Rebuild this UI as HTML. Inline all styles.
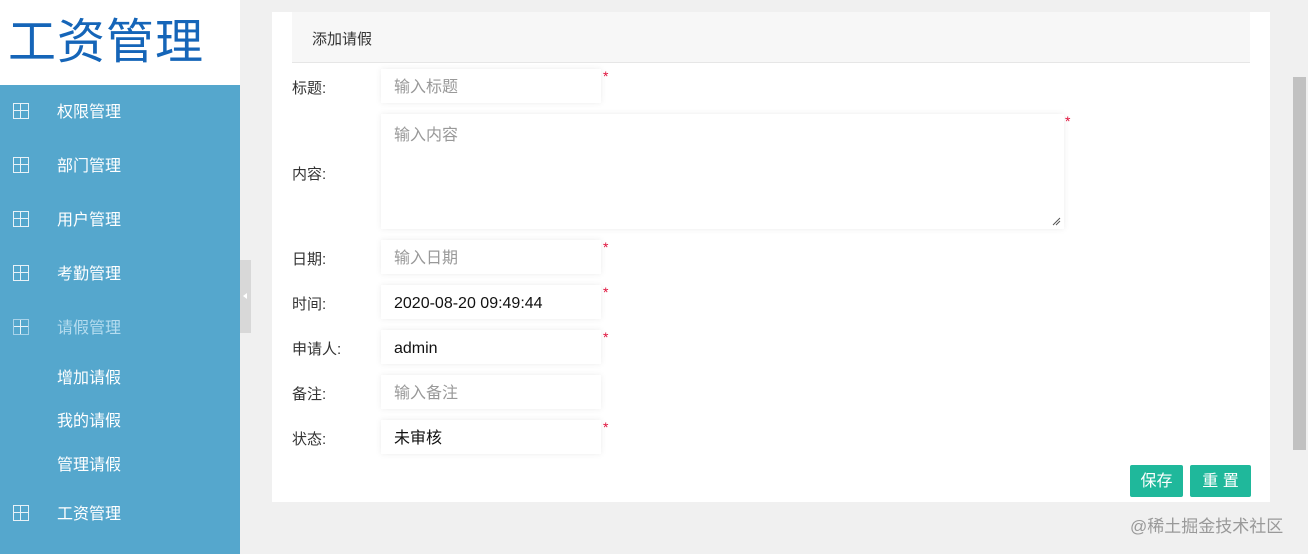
<!DOCTYPE html>
<html><head><meta charset="utf-8"><style>
*{margin:0;padding:0;box-sizing:border-box}
body{width:1308px;height:554px;overflow:hidden;background:#f0f0f0;font-family:"Liberation Sans","Noto Sans CJK SC",sans-serif;position:relative}
.side{position:absolute;left:0;top:0;width:240px;height:554px;background:#55a7cd}
.logo{height:85px;background:#fff;color:#1565b8;font-size:48px;line-height:85px;padding-left:8px;letter-spacing:1px}
.mi{position:absolute;left:0;width:240px;color:#fff;font-size:16px}
.mi .ic{position:absolute;left:13px;top:-8px;width:16px;height:16px;border:1px solid #e8f2f8}
.mi .ic:before{content:"";position:absolute;left:6px;top:0;width:1px;height:14px;background:#e8f2f8}
.mi .ic:after{content:"";position:absolute;left:0;top:6px;width:14px;height:1px;background:#e8f2f8}
.mi span{position:absolute;left:57px;top:-9px;line-height:22px}
.panel{position:absolute;left:272px;top:12px;width:998px;height:490px;background:#fff}
.hd{position:absolute;left:20px;top:0;width:958px;height:51px;background:#f7f7f7;border-bottom:1px solid #e6e6e6;font-size:15px;color:#333;line-height:55px;padding-left:20px}
.lb{position:absolute;left:292px;font-size:15px;color:#333}
.in{position:absolute;left:381px;width:220px;height:34px;background:#fff;box-shadow:0 0 6px rgba(0,0,0,.08);font-size:16px;line-height:38px;padding-left:13px;color:#999}
.in.v{color:#111}
.st{position:absolute;color:#e0103a;font-size:14px}
.btn{position:absolute;top:465px;height:32px;background:#1fb89b;color:#fff;font-size:16px;line-height:34px;text-align:center;border-radius:2px}
</style></head><body>
<div class="side"><div class="logo">工资管理</div>
<div class="mi" style="top:111px"><i class="ic"></i><span>权限管理</span></div>
<div class="mi" style="top:165px"><i class="ic"></i><span>部门管理</span></div>
<div class="mi" style="top:219px"><i class="ic"></i><span>用户管理</span></div>
<div class="mi" style="top:273px"><i class="ic"></i><span>考勤管理</span></div>
<div class="mi" style="top:327px;color:#b5dcef"><i class="ic" style="border-color:#a8d3ea"></i><span>请假管理</span></div>
<div class="mi" style="top:377px"><span>增加请假</span></div>
<div class="mi" style="top:420px"><span>我的请假</span></div>
<div class="mi" style="top:464px"><span>管理请假</span></div>
<div class="mi" style="top:513px"><i class="ic"></i><span>工资管理</span></div>
</div>
<div style="position:absolute;left:240px;top:260px;width:11px;height:73px;background:#d8d8d8"><div style="position:absolute;left:3px;top:33px;border:3px solid transparent;border-right:4px solid #fff;border-left:0"></div></div>
<div class="panel"><div class="hd">添加请假</div></div>
<div class="lb" style="top:77px">标题:</div>
<div class="lb" style="top:163px">内容:</div>
<div class="lb" style="top:248px">日期:</div>
<div class="lb" style="top:293px">时间:</div>
<div class="lb" style="top:338px">申请人:</div>
<div class="lb" style="top:383px">备注:</div>
<div class="lb" style="top:428px">状态:</div>
<div class="in" style="top:69px">输入标题</div>
<div class="in" style="top:114px;width:683px;height:115px;line-height:44px;padding-top:0">输入内容
<svg style="position:absolute;right:3px;bottom:3px" width="9" height="9"><path d="M1 8L8 1M4 8L8 4" stroke="#555" stroke-width="1"/></svg></div>
<div class="in" style="top:240px">输入日期</div>
<div class="in v" style="top:285px">2020-08-20 09:49:44</div>
<div class="in v" style="top:330px">admin</div>
<div class="in" style="top:375px">输入备注</div>
<div class="in v" style="top:420px">未审核</div>
<div class="st" style="left:603px;top:68px">*</div>
<div class="st" style="left:1065px;top:113px">*</div>
<div class="st" style="left:603px;top:239px">*</div>
<div class="st" style="left:603px;top:284px">*</div>
<div class="st" style="left:603px;top:329px">*</div>
<div class="st" style="left:603px;top:419px">*</div>
<div class="btn" style="left:1130px;width:53px">保存</div>
<div class="btn" style="left:1190px;width:61px">重 置</div>
<div style="position:absolute;left:1293px;top:77px;width:13px;height:373px;background:#c1c1c1"></div>
<div style="position:absolute;left:1130px;top:512px;font-size:17px;color:#999">@稀土掘金技术社区</div>
</body></html>
